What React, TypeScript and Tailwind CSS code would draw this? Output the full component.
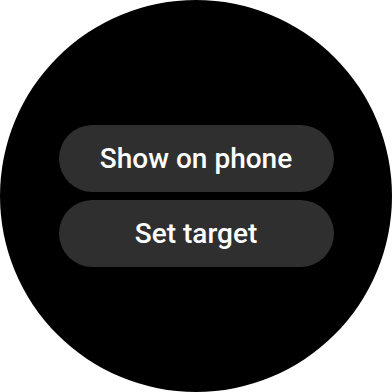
import React from 'react';

export default function App() {
  return (
    <div className="w-[392px] h-[392px] bg-white">
      <div className="w-[392px] h-[392px] rounded-full bg-black flex flex-col items-center justify-center gap-[8px] font-['Roboto',sans-serif]">
        <button className="w-[275px] h-[67px] rounded-full bg-[#2f2f2f] text-white text-[28px] font-medium leading-none">
          Show on phone
        </button>
        <button className="w-[275px] h-[67px] rounded-full bg-[#2f2f2f] text-white text-[28px] font-medium leading-none">
          Set target
        </button>
      </div>
    </div>
  );
}
